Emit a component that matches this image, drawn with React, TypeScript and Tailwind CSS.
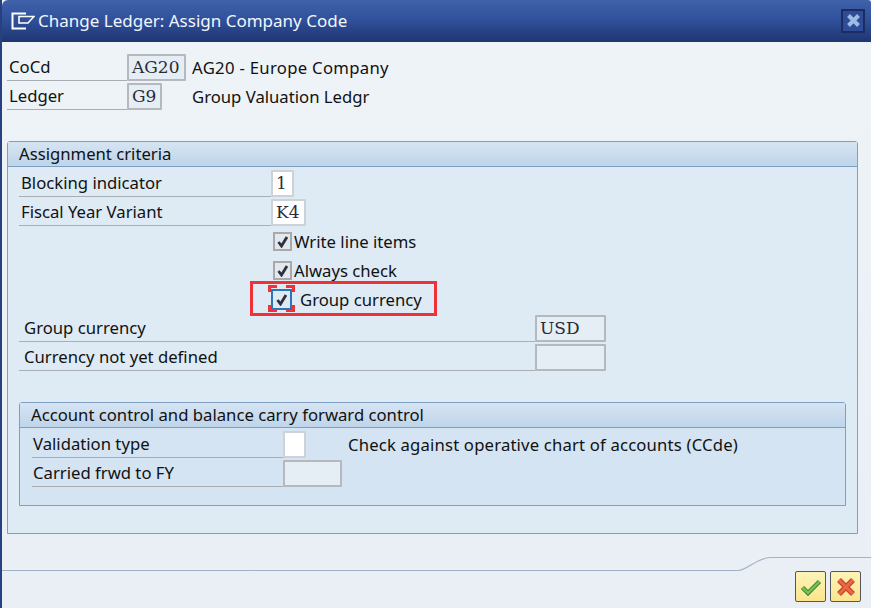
import React from 'react';

const labelFont = "font-['Noto_Sans','Open_Sans',sans-serif] text-[16.7px] text-[#111]";
const monoFont = "font-['DejaVu_Serif',serif] text-[17px] text-[#2a2b38]";

const Field = ({ value, width, kind }: { value?: string; width: string; kind: 'ro' | 'edit' }) => (
  <div
    className={`${width} h-[27px] shrink-0 border-2 rounded-[1px] pl-[3px] flex items-center leading-none ${monoFont} ${
      kind === 'edit' ? 'bg-white border-[#cdd2d6]' : 'bg-[#e6eef5] border-[#b5b9bd]'
    }`}
  >
    {value}
  </div>
);

const Row = ({ label, labelWidth, indent, children }: { label: string; labelWidth: string; indent: string; children: React.ReactNode }) => (
  <div className="flex h-[27px] mb-[2px]">
    <div className={`${labelWidth} ${indent} shrink-0 border-b border-[#a8aeb4] flex items-center whitespace-nowrap ${labelFont}`}>{label}</div>
    {children}
  </div>
);

const Check = ({ focused }: { focused?: boolean }) => (
  <div
    className={`flex items-center justify-center border-2 ${
      focused ? 'w-[21px] h-[21px] -ml-[2px] border-[#2f74b5] bg-[#dfe9f3]' : 'w-[19px] h-[19px] border-[#a9a9a9] bg-[#e3e8ee]'
    }`}
  >
    <svg width="13" height="13" viewBox="0 0 13 13">
      <path d="M2.5 7 L5.5 11 L11 2" fill="none" stroke="#2c3040" strokeWidth="2.8" />
    </svg>
  </div>
);

const CheckRow = ({ label }: { label: string }) => (
  <div className="flex items-center h-[27px] mb-[2px] pl-[254px]">
    <Check />
    <span className={`ml-[2px] whitespace-nowrap ${labelFont}`}>{label}</span>
  </div>
);

const Corner = ({ className }: { className: string }) => <div className={`absolute w-[9px] h-[7px] border-[#ee3338] ${className}`} />;

export default function App() {
  return (
    <div className="w-[871px] h-[608px] flex flex-col overflow-hidden bg-[#eef3f7] border-l-2 border-[#27407f]">
      {/* Title bar */}
      <div className="h-[42px] shrink-0 flex items-center pl-[9px] pr-[6px] pb-[1px] bg-gradient-to-b from-[#3f62ab] via-[#2f4f99] to-[#1e3671] rounded-tl-[6px] rounded-tr-[3px]">
        <svg width="24" height="18" viewBox="0 0 24 18" className="shrink-0">
          <path d="M15 1.5 H1.5 V16.5 H15" fill="none" stroke="#fff" strokeWidth="2" />
          <path d="M8 4.5 H23 L17 11 H8 Z" fill="none" stroke="#fff" strokeWidth="1.6" />
        </svg>
        <span className="ml-[3px] font-['Noto_Sans',sans-serif] text-[17px] text-[#f2f6fb] whitespace-nowrap">Change Ledger: Assign Company Code</span>
        <div className="ml-auto w-[24px] h-[24px] border-2 border-[#1b2c60] bg-[#2f4d97] flex items-center justify-center">
          <svg width="15" height="15" viewBox="0 0 15 15">
            <path d="M2.5 2.5 L12.5 12.5 M12.5 2.5 L2.5 12.5" stroke="#9dbbe3" strokeWidth="4" />
          </svg>
        </div>
      </div>

      {/* Content */}
      <div className="flex-1 flex flex-col pl-[5px] pt-[12px] relative bg-gradient-to-b from-[#eef3f7] to-[#e9eff5]">
        <Row label="CoCd" labelWidth="w-[120px]" indent="pl-[2px]">
          <Field value="AG20" width="w-[59px]" kind="ro" />
          <span className={`ml-[6px] flex items-center tracking-[0.3px] ${labelFont}`}>AG20 - Europe Company</span>
        </Row>
        <Row label="Ledger" labelWidth="w-[120px]" indent="pl-[2px]">
          <Field value="G9" width="w-[35px]" kind="ro" />
          <span className={`ml-[30px] flex items-center ${labelFont}`}>Group Valuation Ledgr</span>
        </Row>

        {/* Assignment criteria */}
        <div className="mt-[29px] w-[851px] h-[393px] border border-[#7f9fc2] rounded-t-[3px] bg-[#deeaf4] flex flex-col">
          <div className={`h-[25px] shrink-0 border-b border-[#7f9fc2] pl-[11px] flex items-center bg-gradient-to-b from-[#d6e4f2] to-[#bfd5ea] ${labelFont}`}>Assignment criteria</div>
          <div className="pl-[11px] pt-[3px] relative">
            <Row label="Blocking indicator" labelWidth="w-[252px]" indent="pl-[2px]">
              <Field value="1" width="w-[23px]" kind="edit" />
            </Row>
            <Row label="Fiscal Year Variant" labelWidth="w-[252px]" indent="pl-[2px]">
              <Field value="K4" width="w-[35px]" kind="edit" />
            </Row>
            <CheckRow label="Write line items" />
            <CheckRow label="Always check" />
            <div className="flex items-center h-[27px] mb-[2px] pl-[254px]">
              <Check focused />
              <span className={`ml-[8px] whitespace-nowrap ${labelFont}`}>Group currency</span>
            </div>
            {/* red highlight around the focused checkbox */}
            <div className="absolute left-[242px] top-[114px] w-[187px] h-[35px] border-[3px] border-[#ee3338]">
              <Corner className="left-[15px] top-[1px] border-l-[3px] border-t-[3px]" />
              <Corner className="left-[33px] top-[1px] border-r-[3px] border-t-[3px]" />
              <Corner className="left-[15px] bottom-[1px] border-l-[3px] border-b-[3px]" />
              <Corner className="left-[33px] bottom-[1px] border-r-[3px] border-b-[3px]" />
            </div>
            <Row label="Group currency" labelWidth="w-[516px]" indent="pl-[5px]">
              <Field value="USD" width="w-[71px]" kind="ro" />
            </Row>
            <Row label="Currency not yet defined" labelWidth="w-[516px]" indent="pl-[5px]">
              <Field width="w-[71px]" kind="ro" />
            </Row>
          </div>

          {/* Account control */}
          <div className="mt-[29px] ml-[11px] w-[827px] h-[104px] border border-[#7f9fc2] rounded-t-[3px] bg-[#d4e4f3] flex flex-col">
            <div className={`h-[25px] shrink-0 border-b border-[#7f9fc2] pl-[11px] flex items-center bg-gradient-to-b from-[#d6e4f2] to-[#bfd5ea] ${labelFont}`}>Account control and balance carry forward control</div>
            <div className="pl-[12px] pt-[3px]">
              <Row label="Validation type" labelWidth="w-[251px]" indent="pl-[1px]">
                <Field width="w-[23px]" kind="edit" />
                <span className={`ml-[42px] flex items-center whitespace-nowrap tracking-[0.17px] ${labelFont}`}>Check against operative chart of accounts (CCde)</span>
              </Row>
              <Row label="Carried frwd to FY" labelWidth="w-[251px]" indent="pl-[1px]">
                <Field width="w-[59px]" kind="ro" />
              </Row>
            </div>
          </div>
        </div>

        {/* Footer */}
        <svg width="869" height="20" viewBox="0 0 869 20" className="absolute left-0 top-[513px]">
          <path d="M0 15.5 H736 C745 15 755 3 768 2.5 H869" fill="none" stroke="#a3b3c6" strokeWidth="1.2" />
        </svg>
        <div className="mt-auto mb-[6px] mr-[10px] flex justify-end gap-[4px]">
          <button className="w-[31px] h-[31px] border border-[#55555a] rounded-[2px] bg-gradient-to-b from-[#fdf2b8] to-[#fbe58c] flex items-center justify-center">
            <svg width="22" height="18" viewBox="0 0 22 18">
              <path d="M2.5 9.5 L8 15 L19.5 3.5" fill="none" stroke="#2f7f4a" strokeWidth="4.5" />
              <path d="M2.5 9.5 L8 15 L19.5 3.5" fill="none" stroke="#7cc040" strokeWidth="2.5" />
            </svg>
          </button>
          <button className="w-[31px] h-[31px] border border-[#55555a] rounded-[2px] bg-gradient-to-b from-[#fdf2b8] to-[#fbe58c] flex items-center justify-center">
            <svg width="20" height="20" viewBox="0 0 20 20">
              <path d="M3 3 L17 17 M17 3 L3 17" stroke="#c8423a" strokeWidth="5.5" />
              <path d="M3 3 L17 17 M17 3 L3 17" stroke="#ea6a3a" strokeWidth="3" />
            </svg>
          </button>
        </div>
      </div>
    </div>
  );
}
